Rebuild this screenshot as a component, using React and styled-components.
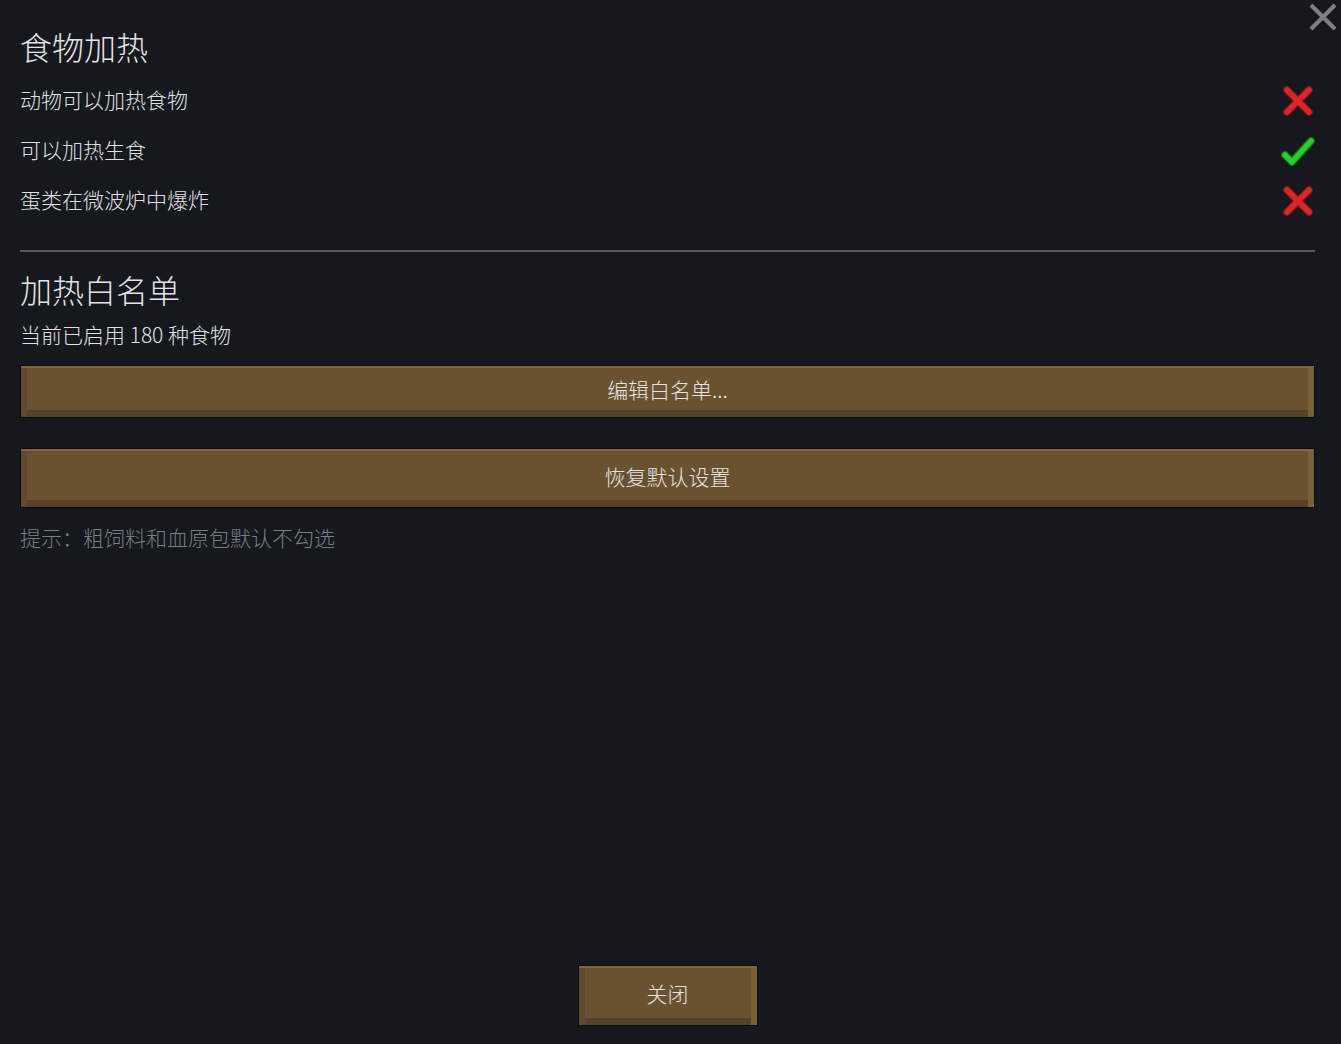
import React from "react";
import styled, { createGlobalStyle } from "styled-components";

const Global = createGlobalStyle`
  html, body { margin: 0; padding: 0; background: #15181d; }
  body { font-family: "Noto Sans CJK SC", "Noto Sans", sans-serif; color: #e2e2e2; }
  * { box-sizing: border-box; }
`;

const Page = styled.div`
  position: relative;
  height: 1044px;
  display: flex;
  flex-direction: column;
  padding: 22px 26px 18px 20px;
`;

const CloseIcon = styled.button`
  position: absolute;
  top: 2px;
  right: 3px;
  width: 30px;
  height: 30px;
  padding: 0;
  border: none;
  background: transparent;
  display: flex;
  align-items: center;
  justify-content: center;
`;

const Title = styled.h2`
  margin: ${(p) => p.$mt || 0}px 0 0;
  font-size: 32px;
  line-height: 48px;
  font-weight: 300;
  color: #e4e4e4;
`;

const Rows = styled.div`
  margin-top: 4px;
  display: flex;
  flex-direction: column;
`;

const Row = styled.div`
  height: 50px;
  display: flex;
  align-items: center;
  justify-content: space-between;
  font-size: 21px;
  font-weight: 300;
  color: #e0e0e0;
`;

const IconBox = styled.span`
  width: 34px;
  height: 34px;
  display: flex;
  align-items: center;
  justify-content: center;
  margin-top: 4px;
`;

const Divider = styled.hr`
  margin: 26px 0 0;
  border: none;
  height: 2px;
  background: #55585c;
`;

const Text = styled.div`
  margin-top: ${(p) => p.$mt || 0}px;
  font-size: 21px;
  line-height: 30px;
  font-weight: 300;
  color: ${(p) => (p.$muted ? "#7b7d80" : "#e0e0e0")};
`;

const Button = styled.button`
  display: flex;
  align-items: center;
  justify-content: center;
  margin-top: ${(p) => p.$mt || 0}px;
  width: ${(p) => p.$w || "100%"};
  height: ${(p) => p.$h}px;
  align-self: ${(p) => (p.$center ? "center" : "stretch")};
  border: 1px solid #0a0a0a;
  background: #6a5230;
  box-shadow: inset 0 2px 0 #806639, inset 6px 0 0 #5f4a2c,
    inset -6px 0 0 #7a6036, inset 0 -7px 0 #54422a;
  font-family: "Noto Sans CJK SC", "Noto Sans", sans-serif;
  font-size: 21px;
  font-weight: 300;
  color: #e4e4e4;
  padding: 0 0 5px;
`;

const Spacer = styled.div`
  flex: 1;
`;

const Cross = () => (
  <svg width="34" height="34" viewBox="0 0 34 34">
    <g strokeLinecap="round" fill="none">
      <path d="M6 6 L28 28 M28 6 L6 28" stroke="#7a1416" strokeWidth="8" />
      <path d="M6 6 L28 28 M28 6 L6 28" stroke="#dc2626" strokeWidth="5.5" />
    </g>
  </svg>
);

const Check = () => (
  <svg width="34" height="34" viewBox="0 0 34 34">
    <g strokeLinecap="round" strokeLinejoin="round" fill="none">
      <path d="M4 21 L11 28 L30 7" stroke="#146a14" strokeWidth="8" />
      <path d="M4 21 L11 28 L30 7" stroke="#26d126" strokeWidth="5.5" />
    </g>
  </svg>
);

const rows = [
  { label: "动物可以加热食物", on: false },
  { label: "可以加热生食", on: true },
  { label: "蛋类在微波炉中爆炸", on: false },
];

export default function App() {
  return (
    <>
      <Global />
      <Page>
        <CloseIcon aria-label="关闭">
          <svg width="30" height="30" viewBox="0 0 30 30">
            <path d="M3 3 L27 27 M27 3 L3 27" stroke="#7e8083" strokeWidth="4" />
          </svg>
        </CloseIcon>
        <Title>食物加热</Title>
        <Rows>
          {rows.map((r) => (
            <Row key={r.label}>
              <span>{r.label}</span>
              <IconBox>{r.on ? <Check /> : <Cross />}</IconBox>
            </Row>
          ))}
        </Rows>
        <Divider />
        <Title $mt={13}>加热白名单</Title>
        <Text $mt={6}>当前已启用 180 种食物</Text>
        <Button $mt={16} $h={53}>编辑白名单...</Button>
        <Button $mt={30} $h={60}>恢复默认设置</Button>
        <Text $mt={14} $muted>提示：粗饲料和血原包默认不勾选</Text>
        <Spacer />
        <Button $center $w="180px" $h={61}>关闭</Button>
      </Page>
    </>
  );
}
